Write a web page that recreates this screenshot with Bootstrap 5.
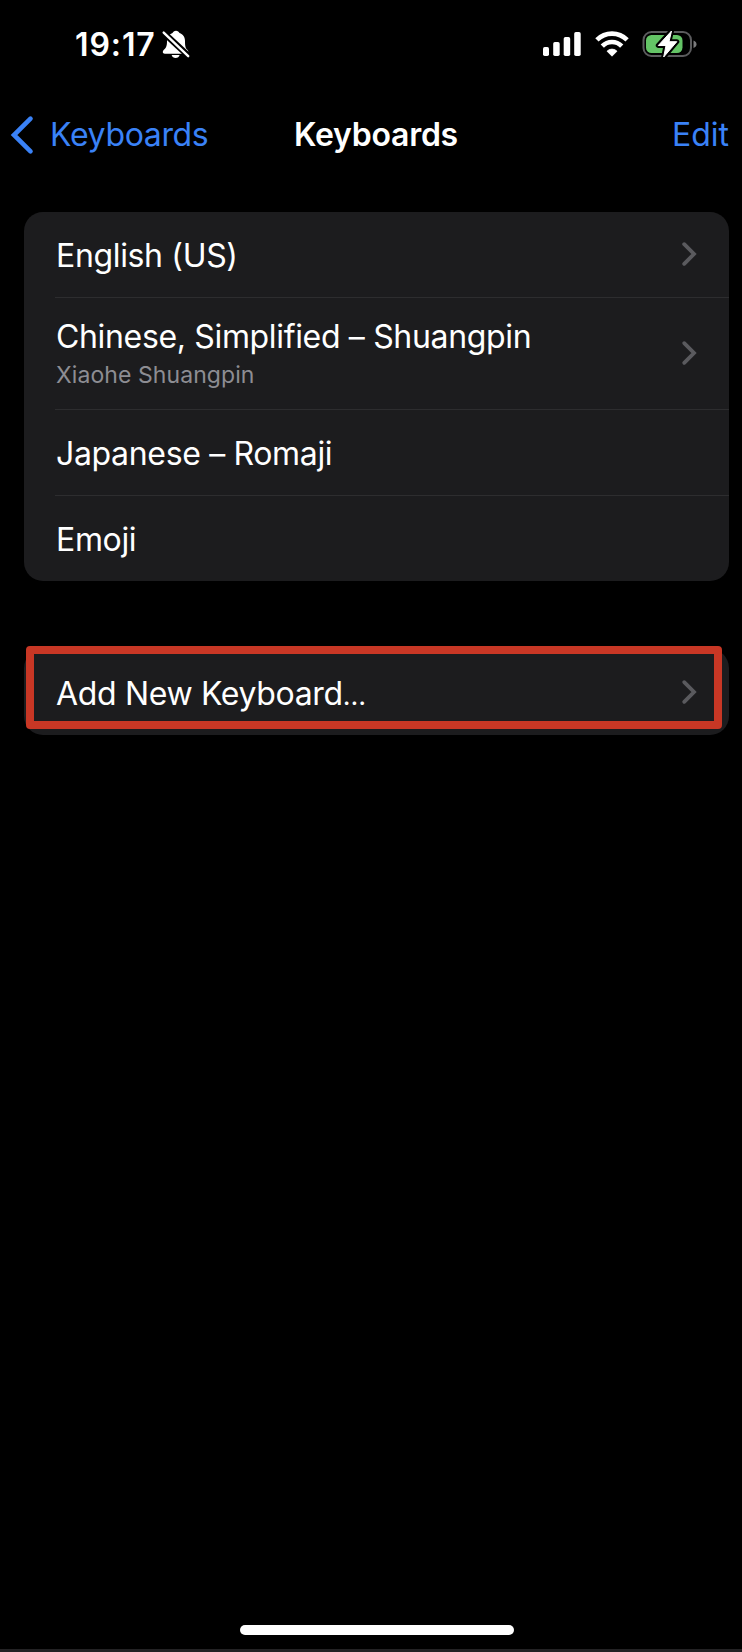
<!DOCTYPE html>
<html lang="en">
<head>
<meta charset="utf-8">
<meta name="viewport" content="width=device-width, initial-scale=1">
<title>Keyboards</title>
<link href="https://cdn.jsdelivr.net/npm/bootstrap@5.3.0/dist/css/bootstrap.min.css" rel="stylesheet">
<style>
  body { background: #000; color: #fff; font-family: Inter, "Liberation Sans", sans-serif; font-size: 32px; line-height: 40px; letter-spacing: -.34px; height: 1652px; overflow: hidden; border-bottom: 3px solid #232224; }
  svg { display: block; flex: none; }
  .status { height: 88px; padding: 0 45px 0 75px; }
  .clock { font-weight: 600; letter-spacing: .9px; margin-right: 6px; padding-top: 2px; }
  .topbar { display: grid; grid-template-columns: 284px auto 1fr; align-items: center; height: 92px; padding: 1px 13px 0 10px; }
  .ios-blue { color: #3a82f7; }
  .back-label { margin-left: 15px; }
  .title { font-weight: 600; letter-spacing: -.25px; }
  .edit { letter-spacing: 0; }
  .content { padding-top: 32px; }
  .group { margin: 0 13px 0 24px; border-radius: 19px; background: #1c1c1e; }
  .group + .group { margin-top: 68px; }
  .cell { margin-left: 31px; height: 85.75px; padding: 0 32px 0 1px; border-bottom: 1.3px solid #2d2d2f; }
  .cell.final { border-bottom: 0; }
  .cell.tall { height: 112px; }
  .label { padding-top: 3px; }
  .sub { font-size: 23px; line-height: 30px; letter-spacing: .08px; color: #8d8d93; margin-top: 3px; }
  .dots { font-size: 27px; line-height: 1; }
  .highlight-frame { left: 2px; top: -3px; width: 696px; height: 83px; border: 8px solid #c83725; border-radius: 4px; }
  .home-bar { width: 274px; height: 10px; border-radius: 5px; background: #fff; margin: 0 0 14px 240px; }
</style>
</head>
<body class="d-flex flex-column">
<svg class="d-none">
  <symbol id="chevron" viewBox="0 0 16 26"><path d="M3.2 3.2 13 13 3.2 22.8" fill="none" stroke="#5a5a5e" stroke-width="3.8" stroke-linecap="round"/></symbol>
</svg>

<header class="status d-flex align-items-center justify-content-between">
  <div class="d-flex align-items-center">
    <span class="clock">19:17</span>
    <svg width="28" height="30" viewBox="0 0 28 30">
      <g fill="#fff">
        <path d="M14 1.800c-1.700 0-3 1-3.500 2.300C7 5.200 5 8.100 5 12c0 5-.8 6.500-2.600 8.300C1.200 21.500.8 22.200.8 23.100c0 1 .8 1.600 2 1.600h21.600c1.200 0 2-.6 2-1.600 0-.9-.4-1.600-1.600-2.800C23.400 18.500 23 17 23 12c0-3.900-2-6.800-5.500-7.900C17 2.800 15.700 1.800 14 1.800z"/>
        <path d="M9.600 26h8c-.5 1.800-2 3-4 3s-3.500-1.200-4-3z"/>
      </g>
      <path d="M-.5 1.800 27.500 27.800" stroke="#000" stroke-width="6.200"/>
      <path d="M1.700 3.600 26.200 27.200" stroke="#fff" stroke-width="2.400" stroke-linecap="round"/>
    </svg>
  </div>
  <div class="d-flex align-items-center">
    <svg width="38" height="26" viewBox="0 0 38 26" fill="#fff">
      <rect x="0" y="16" width="6" height="9" rx="1.700"/>
      <rect x="10.200" y="11" width="6.500" height="14" rx="1.700"/>
      <rect x="20.700" y="6" width="6.500" height="19" rx="1.700"/>
      <rect x="31.200" y="1" width="6.500" height="24" rx="1.700"/>
    </svg>
    <svg width="34" height="26" viewBox="0 0 34 26" style="margin-left:14px">
      <g fill="none" stroke="#fff" stroke-width="4.600">
        <path d="M1.900 8.900a21.300 21.300 0 0 1 30.200 0"/>
        <path d="M7.300 15.100a13.700 13.700 0 0 1 19.400 0"/>
      </g>
      <path d="M17 25.200 12 20.200a7 7 0 0 1 10 0z" fill="#fff" stroke="#fff" stroke-width=".8" stroke-linejoin="round"/>
    </svg>
    <svg width="55" height="30" viewBox="0 0 55 30" style="margin-left:13px">
      <rect x="1.500" y="3" width="47.500" height="24" rx="8" fill="none" stroke="#5b5b5d" stroke-width="2"/>
      <path d="M51.500 11.500c2 .7 3 2 3 3.700s-1 3-3 3.700z" fill="#7b7b7d"/>
      <rect x="4" y="6" width="36.500" height="18" rx="5.500" fill="#64c466"/>
      <path d="M29.500 2 16.300 16.500h7.700L21.700 28 34.800 12.700H27z" fill="#fff" stroke="#000" stroke-width="5" stroke-linejoin="round"/>
      <path d="M29.500 2 16.300 16.500h7.700L21.700 28 34.800 12.700H27z" fill="#fff" stroke="#fff" stroke-width="1" stroke-linejoin="round"/>
    </svg>
  </div>
</header>

<nav class="topbar">
  <div class="d-flex align-items-center ios-blue">
    <svg width="25" height="40" viewBox="0 0 25 40"><path d="M20.500 3.600 4 20l16.500 16.400" fill="none" stroke="#3a82f7" stroke-width="4.600" stroke-linecap="round"/></svg>
    <span class="back-label">Keyboards</span>
  </div>
  <span class="title">Keyboards</span>
  <span class="ios-blue edit text-end">Edit</span>
</nav>

<main class="content flex-grow-1">
  <section class="group">
    <div class="cell d-flex align-items-center justify-content-between"><span class="label">English (US)</span><svg width="16" height="26"><use href="#chevron"/></svg></div>
    <div class="cell tall d-flex align-items-center justify-content-between">
      <div class="d-flex flex-column"><span>Chinese, Simplified – Shuangpin</span><span class="sub">Xiaohe Shuangpin</span></div>
      <svg width="16" height="26"><use href="#chevron"/></svg>
    </div>
    <div class="cell d-flex align-items-center"><span class="label">Japanese – Romaji</span></div>
    <div class="cell final d-flex align-items-center"><span class="label">Emoji</span></div>
  </section>
  <section class="group position-relative">
    <div class="cell final d-flex align-items-center justify-content-between"><span class="label">Add New Keyboard<span class="dots">…</span></span><svg width="16" height="26"><use href="#chevron"/></svg></div>
    <div class="highlight-frame position-absolute"></div>
  </section>
</main>
<div class="home-bar"></div>
</body>
</html>
